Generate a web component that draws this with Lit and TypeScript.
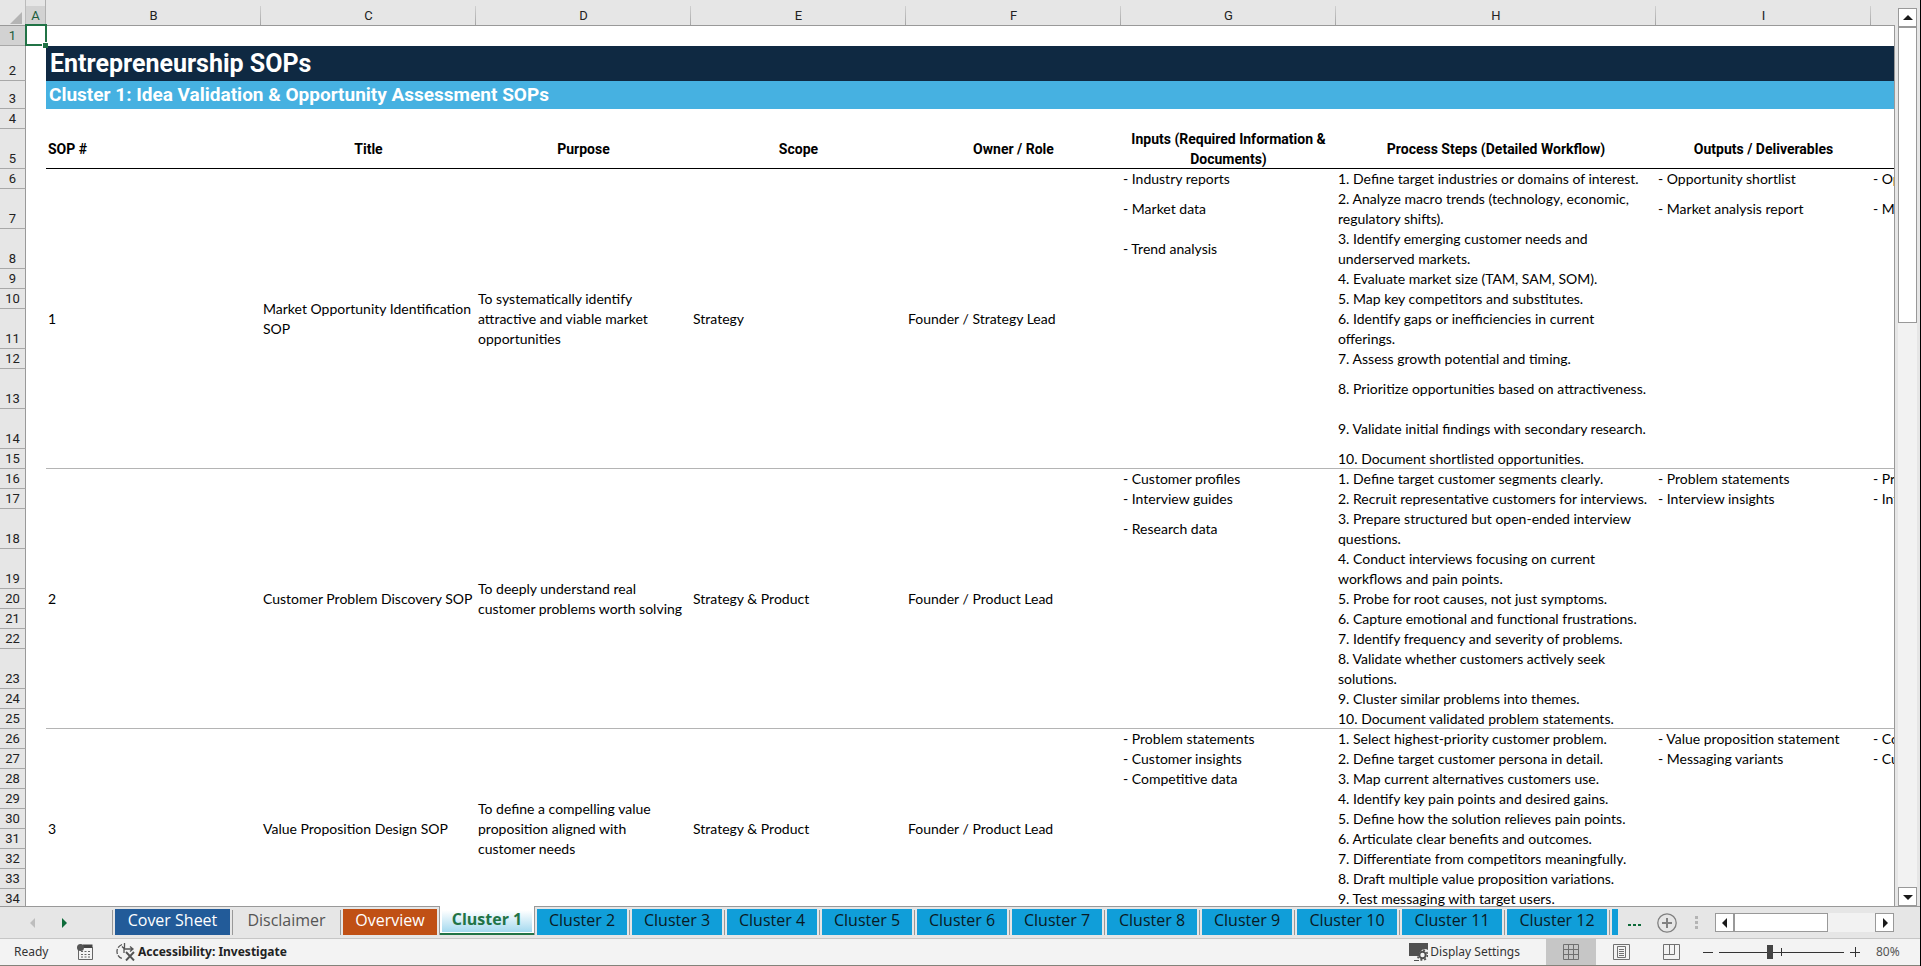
import { LitElement, html, css, svg, nothing } from 'lit';
import { customElement } from 'lit/decorators.js';
import { classMap } from 'lit/directives/class-map.js';

interface Step {
  tall?: boolean;
  input?: string;
  step: string;
  output?: string;
  metric?: string;
}
interface Sop {
  id: string;
  title: string;
  purpose: string;
  scope: string;
  owner: string;
  rows: Step[];
}

const COLUMNS = ['A', 'B', 'C', 'D', 'E', 'F', 'G', 'H', 'I', 'J'];
const HEADINGS = [
  'SOP #', 'Title', 'Purpose', 'Scope', 'Owner / Role',
  'Inputs (Required Information &\nDocuments)',
  'Process Steps (Detailed Workflow)', 'Outputs / Deliverables', 'KPIs',
];

const SOPS: Sop[] = [
  {
    id: '1',
    title: 'Market Opportunity Identification\nSOP',
    purpose: 'To systematically identify\nattractive and viable market\nopportunities',
    scope: 'Strategy',
    owner: 'Founder / Strategy Lead',
    rows: [
      { input: '- Industry reports', step: '1. Define target industries or domains of interest.', output: '- Opportunity shortlist', metric: '- Opportunity score' },
      { tall: true, input: '- Market data', step: '2. Analyze macro trends (technology, economic,\nregulatory shifts).', output: '- Market analysis report', metric: '- Market size' },
      { tall: true, input: '- Trend analysis', step: '3. Identify emerging customer needs and\nunderserved markets.' },
      { step: '4. Evaluate market size (TAM, SAM, SOM).' },
      { step: '5. Map key competitors and substitutes.' },
      { tall: true, step: '6. Identify gaps or inefficiencies in current\nofferings.' },
      { step: '7. Assess growth potential and timing.' },
      { tall: true, step: '8. Prioritize opportunities based on attractiveness.' },
      { tall: true, step: '9. Validate initial findings with secondary research.' },
      { step: '10. Document shortlisted opportunities.' },
    ],
  },
  {
    id: '2',
    title: 'Customer Problem Discovery SOP',
    purpose: 'To deeply understand real\ncustomer problems worth solving',
    scope: 'Strategy & Product',
    owner: 'Founder / Product Lead',
    rows: [
      { input: '- Customer profiles', step: '1. Define target customer segments clearly.', output: '- Problem statements', metric: '- Problem severity' },
      { input: '- Interview guides', step: '2. Recruit representative customers for interviews.', output: '- Interview insights', metric: '- Interviews held' },
      { tall: true, input: '- Research data', step: '3. Prepare structured but open-ended interview\nquestions.' },
      { tall: true, step: '4. Conduct interviews focusing on current\nworkflows and pain points.' },
      { step: '5. Probe for root causes, not just symptoms.' },
      { step: '6. Capture emotional and functional frustrations.' },
      { step: '7. Identify frequency and severity of problems.' },
      { tall: true, step: '8. Validate whether customers actively seek\nsolutions.' },
      { step: '9. Cluster similar problems into themes.' },
      { step: '10. Document validated problem statements.' },
    ],
  },
  {
    id: '3',
    title: 'Value Proposition Design SOP',
    purpose: 'To define a compelling value\nproposition aligned with\ncustomer needs',
    scope: 'Strategy & Product',
    owner: 'Founder / Product Lead',
    rows: [
      { input: '- Problem statements', step: '1. Select highest-priority customer problem.', output: '- Value proposition statement', metric: '- Conversion rate' },
      { input: '- Customer insights', step: '2. Define target customer persona in detail.', output: '- Messaging variants', metric: '- Customer response' },
      { input: '- Competitive data', step: '3. Map current alternatives customers use.' },
      { step: '4. Identify key pain points and desired gains.' },
      { step: '5. Define how the solution relieves pain points.' },
      { step: '6. Articulate clear benefits and outcomes.' },
      { step: '7. Differentiate from competitors meaningfully.' },
      { step: '8. Draft multiple value proposition variations.' },
      { step: '9. Test messaging with target users.' },
      { step: '10. Finalize value proposition.' },
    ],
  },
];

@customElement('sheet-grid')
export class SheetGrid extends LitElement {
  static styles = css`
    :host { display: block; position: relative; overflow: hidden; background: #fff; }
    table { width: 100%; table-layout: fixed; border-collapse: separate; border-spacing: 0; }
    .c-head { width: 26px; }
    .c-a { width: 20px; }
    .c-std { width: 215px; }
    .c-wide { width: 320px; }
    th, td { box-sizing: border-box; padding: 0 2px; text-align: left; vertical-align: middle;
      font: 400 14px/20px Lato, "Liberation Sans", sans-serif; color: #000; white-space: pre; }
    .col { height: 26px; padding: 6px 0 0; text-align: center; color: #222; font: 400 13px/19px Roboto, sans-serif;
      border-bottom: 1px solid #999;
      background: linear-gradient(#d0d0d0, #999) right 6px / 1px 20px no-repeat #e6e6e6; }
    .col:nth-child(n + 3) { background-size: 1px 100%; background-position: right 6px; }
    .col.on { color: #1c5c3c; background: linear-gradient(#d2d2d2, #d2d2d2) 0 6px no-repeat #e6e6e6; border-right: 1px solid #b0b0b0; }
    .corner { background: #e6e6e6; border-right: 1px solid #bbb; }
    .corner svg { display: block; margin: 4px 0 0 10px; }
    .row { padding: 0; text-align: center; vertical-align: bottom; color: #222; font: 400 13px/19px Roboto, sans-serif;
      background: #e6e6e6; border-right: 1px solid #999; border-bottom: 1px solid #a8a8a8; }
    .row.on { color: #1c5c3c; background: #d2d2d2; }
    .h20 { height: 20px; }
    .h28 { height: 28px; }
    .h35 { height: 35px; }
    .h40 { height: 40px; }
    .title { padding: 1px 4px 0; background: #0f2942; color: #fff; font: 700 25px/34px Roboto, sans-serif; }
    .subtitle { padding: 0 3px; background: #46b1e1; color: #fff; font: 700 19px/28px Roboto, sans-serif; }
    .heading { text-align: center; font: 700 14px/20px Roboto, sans-serif; box-shadow: inset 0 -1px #000; }
    .heading.first { text-align: left; }
    .end { box-shadow: inset 0 -1px #b4b4b4; }
    .cursor { position: absolute; left: 25px; top: 24px; width: 22px; height: 22px; box-sizing: border-box; border: 2px solid #217346; }
    .handle { position: absolute; left: 42px; top: 42px; width: 5px; height: 5px; background: #217346; border: 1px solid #fff; border-width: 1px 0 0 1px; }
  `;

  private rowHead(n: number, size: string) {
    return html`<th scope="row" class="row ${size} ${n === 1 ? 'on' : ''}">${n}</th>`;
  }

  private sop(sop: Sop, first: number) {
    const last = sop.rows.length - 1;
    return sop.rows.map((r, i) => {
      const cls = i === last ? 'end' : '';
      return html`<tr>
        ${this.rowHead(first + i, r.tall ? 'h40' : 'h20')}
        <td></td>
        ${i === 0
          ? [sop.id, sop.title, sop.purpose, sop.scope, sop.owner].map(
              (t) => html`<td class="end" rowspan=${sop.rows.length}>${t}</td>`)
          : nothing}
        <td class=${cls}>${r.input}</td>
        <td class=${cls}>${r.step}</td>
        <td class=${cls}>${r.output}</td>
        <td class=${cls}>${r.metric}</td>
      </tr>`;
    });
  }

  render() {
    let next = 6;
    return html`
      <table>
        <colgroup>
          <col class="c-head" /><col class="c-a" />
          ${COLUMNS.slice(1).map((c) => html`<col class=${c === 'H' ? 'c-wide' : 'c-std'} />`)}
        </colgroup>
        <thead>
          <tr>
            <td class="col corner"><svg width="12" height="12"><path d="M12 0v12H0z" fill="#b4b4b4" /></svg></td>
            ${COLUMNS.map((c) => html`<th scope="col" class=${classMap({ col: true, on: c === 'A' })}>${c}</th>`)}
          </tr>
        </thead>
        <tbody>
          <tr>${this.rowHead(1, 'h20')}<td colspan="10"></td></tr>
          <tr>${this.rowHead(2, 'h35')}<td></td><td class="title" colspan="9">Entrepreneurship SOPs</td></tr>
          <tr>${this.rowHead(3, 'h28')}<td></td><td class="subtitle" colspan="9">Cluster 1: Idea Validation &amp; Opportunity Assessment SOPs</td></tr>
          <tr>${this.rowHead(4, 'h20')}<td colspan="10"></td></tr>
          <tr>${this.rowHead(5, 'h40')}<td></td>
            ${HEADINGS.map((h, i) => html`<th scope="col" class="heading ${i === 0 ? 'first' : ''}">${h}</th>`)}
          </tr>
          ${SOPS.map((s) => {
            const start = next;
            next += s.rows.length;
            return this.sop(s, start);
          })}
        </tbody>
      </table>
      <div class="cursor"></div><div class="handle"></div>
    `;
  }
}

const arrow = (d: string) => html`<svg width="10" height="10" viewBox="0 0 10 10"><path d=${d} fill="#1a1a1a" /></svg>`;

@customElement('scroll-bar')
export class ScrollBar extends LitElement {
  static properties = { horizontal: { type: Boolean, reflect: true } };
  declare horizontal: boolean;
  static styles = css`
    :host { display: flex; flex-direction: column; width: 19px; background: #f2f2f2; }
    :host([horizontal]) { flex-direction: row; width: 179px; height: 19px; }
    button, .thumb { box-sizing: border-box; background: #fff; border: 1px solid #999; margin: 0; padding: 0; }
    button { flex: none; width: 19px; height: 19px; display: grid; place-items: center; }
    .thumb { height: 33%; }
    .room { flex: 1; }
    :host([horizontal]) .thumb { width: 94px; height: 19px; }
  `;
  render() {
    const h = this.horizontal;
    return html`
      <button aria-label=${h ? 'Scroll left' : 'Scroll up'}>${arrow(h ? 'M7 0v10L2 5z' : 'M0 7h10L5 2z')}</button>
      <div class="thumb"></div><div class="room"></div>
      <button aria-label=${h ? 'Scroll right' : 'Scroll down'}>${arrow(h ? 'M3 0v10L8 5z' : 'M0 3h10L5 8z')}</button>
    `;
  }
}

const TABS: [string, string][] = [
  ['Cover Sheet', 'navy'],
  ['Disclaimer', 'plain'],
  ['Overview', 'orange'],
  ['Cluster 1', 'active'],
  ...Array.from({ length: 11 }, (_, i): [string, string] => [`Cluster ${i + 2}`, i + 2 > 9 ? 'blue long' : 'blue']),
];

@customElement('sheet-tabs')
export class SheetTabs extends LitElement {
  static styles = css`
    :host { display: flex; height: 31px; background: #e6e6e6; border-top: 1px solid #999; border-bottom: 1px solid #c6c6c6; }
    button { margin: 0; padding: 0; border: 0; background: none; }
    .nav { display: flex; align-items: center; gap: 27px; padding: 0 43px 0 30px; }
    .nav button { display: flex; }
    .tabs { display: flex; align-items: flex-start; }
    .sep { width: 1px; height: 25px; margin: 3px 2px 0; background: #999; }
    .tab { box-sizing: border-box; height: 26px; margin-top: 2px; padding-bottom: 4px; white-space: nowrap;
      font: 400 16px/22px "Open Sans", sans-serif; color: #0a1a24; }
    .navy { width: 115px; background: #225b99; color: #fff; }
    .plain { width: 103px; color: #555; }
    .orange { width: 94px; background: #c05015; color: #fff; }
    .blue { width: 90px; background: #109ed9; }
    .long { width: 100px; }
    .active { width: 96px; height: 29px; margin: -1px 2px 0; padding: 2px 2px 3px; background: #fff; border: 1px solid #999; border-width: 0 1px;
      box-shadow: inset 0 -2px #217346; color: #217346; font-weight: 700; }
    .active span { display: block; height: 24px; background: linear-gradient(#fff 10%, #a4d9ef); }
    .more { width: 6px; height: 26px; margin-top: 2px; background: #109ed9; }
    .dots { align-self: center; display: flex; gap: 2px; padding: 4px 16px 0 10px; }
    .dots i { width: 3px; height: 2px; background: #0e6b3a; }
    .right { margin-left: auto; display: flex; align-items: center; }
    .add { display: flex; align-items: center; }
    .grip { display: grid; gap: 2px; margin: 0 17px; }
    .grip i { width: 3px; height: 3px; background: #b4b4b4; }
    scroll-bar { margin-right: 26px; }
  `;
  render() {
    return html`
      <div class="nav">
        <button aria-label="Previous sheets"><svg width="5" height="10"><path d="M5 0v10L0 5z" fill="#bdbdbd" /></svg></button>
        <button aria-label="Next sheets"><svg width="5" height="10"><path d="M0 0v10l5-5z" fill="#0e6b3a" /></svg></button>
      </div>
      <div class="tabs">
        ${TABS.map(([name, cls], i) => html`
          ${i === 3 || i === 4 ? nothing : html`<div class="sep"></div>`}
          <button class="tab ${cls}">${cls === 'active' ? html`<span>${name}</span>` : name}</button>`)}
        <div class="sep"></div><div class="more"></div>
      </div>
      <button class="dots" aria-label="More sheets"><i></i><i></i><i></i></button>
      <button class="add" aria-label="New sheet">
        <svg width="20" height="20" fill="none" stroke="#808080"><circle cx="10" cy="10" r="9.2" stroke-width="1.3" /><path d="M10 5v10M5 10h10" stroke-width="2" /></svg>
      </button>
      <div class="right">
        <div class="grip"><i></i><i></i><i></i></div>
        <scroll-bar horizontal></scroll-bar>
      </div>
    `;
  }
}

const macroIcon = svg`
  <path d="M6 .5h9.5V4H6z" fill="#444" /><path d="M1.5 6v9.500h14V3" fill="none" stroke="#666" />
  <circle cx="3.500" cy="3.500" r="3.500" fill="#555" />
  <path d="M4 7.500h2m1.500 0h2m1.500 0h2M4 10.500h2m1.500 0h2m1.500 0h2M4 13h2m1.500 0h2m1.500 0h2" stroke="#666" />`;
const accessIcon = svg`
  <path d="M6 1.500C2.500 3 .7 6 1 9s2 5.500 5 6.500" stroke-dasharray="5 1.500" stroke-width="1.300" />
  <path d="M8.500 0v5.500M6 3.500l2.500 2.500h8M14 3.500l3 2.500-3 2.500M8 6v4" stroke-width="1.300" />
  <path d="M10 9l8 8.500M18 9l-8 8.500" stroke-width="1.900" />`;
const displayIcon = svg`
  <path d="M0 0h19v7a6 6 0 0 0-9 6H0z" fill="#505050" />
  <path d="M5 17.500h5" stroke="#505050" />
  <circle cx="13.500" cy="12" r="3.200" fill="none" stroke="#505050" stroke-width="2" />
  <circle cx="13.500" cy="12" r="5" fill="none" stroke="#505050" stroke-width="1.600" stroke-dasharray="2 1.930" />`;

@customElement('status-bar')
export class StatusBar extends LitElement {
  static styles = css`
    :host { display: flex; align-items: stretch; height: 26px; background: #f3f3f3; border-bottom: 1px solid #83827a;
      font: 400 12px/26px "Noto Sans", sans-serif; color: #333; white-space: nowrap; }
    button { display: flex; align-items: center; margin: 0; padding: 0; border: 0; background: none; font: inherit; color: inherit; }
    svg { flex: none; fill: none; }
    .ready { width: 63px; padding-left: 14px; }
    .access { gap: 3px; margin-left: 23px; font-weight: 700; color: #222; }
    .right { margin-left: auto; display: flex; }
    .display { gap: 2px; margin-right: 26px; }
    .view { width: 50px; justify-content: center; }
    .on { background: #c6c6c6; }
    .zoom { display: flex; align-items: center; gap: 6px; padding-left: 7px; }
    .slider { position: relative; display: flex; }
    .slider::after { content: ""; position: absolute; left: 62px; top: 3px; width: 1px; height: 8px; background: #333; }
    input { appearance: none; width: 125px; height: 14px; margin: 0; background: linear-gradient(#333, #333) 0 7px / 100% 1px no-repeat; }
    input::-webkit-slider-thumb { appearance: none; width: 6px; height: 14px; background: #444; border: 0; }
    .pct { width: 44px; padding-left: 10px; color: #555; }
  `;
  private view(label: string, on: boolean, art: unknown) {
    return html`<button class="view ${on ? 'on' : ''}" aria-label=${label}><svg width="17" height="17" stroke="#707070">${art}</svg></button>`;
  }
  render() {
    return html`
      <span class="ready">Ready</span>
      <button aria-label="Record macro"><svg width="16" height="16">${macroIcon}</svg></button>
      <button class="access"><svg width="19" height="18" stroke="#555">${accessIcon}</svg>Accessibility: Investigate</button>
      <div class="right">
        <button class="display"><svg width="19" height="18">${displayIcon}</svg>Display Settings</button>
        ${this.view('Normal', true, svg`<path d="M.5.5h15v15H.5zM5.500.5v15M10.500.5v15M.5 5.500h15M.5 10.500h15" />`)}
        ${this.view('Page layout', false, svg`<path d="M.5.5h16v15H.5zM4.500 2.500h8v11h-8zM6 5.500h5M6 7.500h5M6 9.500h5M6 11.500h5" />`)}
        ${this.view('Page break preview', false, svg`<path d="M.5.5h16v15H.5zM.5 10.500h11V.5M6.500.5v10" />`)}
        <div class="zoom">
          <button aria-label="Zoom out"><svg width="10" height="10" stroke="#333"><path d="M0 5.500h10" /></svg></button>
          <div class="slider"><input type="range" aria-label="Zoom" min="0" max="200" .value=${'80'} /></div>
          <button aria-label="Zoom in"><svg width="10" height="10" stroke="#333"><path d="M0 5.500h10M5.500 0v10" /></svg></button>
          <span class="pct">80%</span>
        </div>
      </div>
    `;
  }
}

@customElement('app-root')
export class AppRoot extends LitElement {
  static styles = css`
    :host { box-sizing: border-box; display: flex; flex-direction: column; height: 100vh; background: #e6e6e6; border-right: 1px solid #000; }
    .main { flex: 1; min-height: 0; display: flex; }
    .pane { flex: 1; min-width: 0; display: flex; background: linear-gradient(#e6e6e6 25px, #999 25px); padding-right: 1px; }
    sheet-grid { flex: 1; min-width: 0; }
    .side { display: flex; padding: 8px 3px 0; }
  `;
  render() {
    return html`
      <div class="main">
        <div class="pane"><sheet-grid></sheet-grid></div>
        <div class="side"><scroll-bar></scroll-bar></div>
      </div>
      <sheet-tabs></sheet-tabs>
      <status-bar></status-bar>
    `;
  }
}
